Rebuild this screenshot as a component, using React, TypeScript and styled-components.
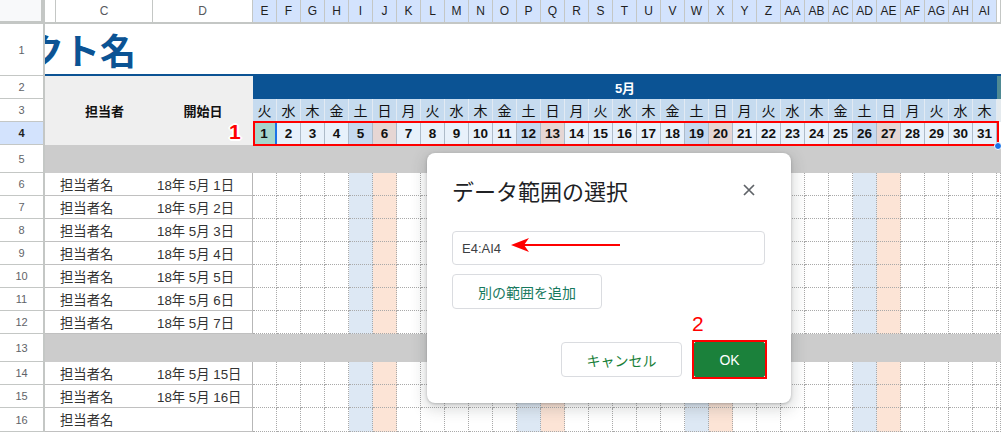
import React from "react";
import styled, { createGlobalStyle, css } from "styled-components";

const GlobalStyle = createGlobalStyle`
  * { box-sizing: border-box; }
  html, body { margin: 0; padding: 0; background: #fff; overflow: hidden; }
  body {
    font-family: "Liberation Sans", "Noto Sans CJK JP", Arial, sans-serif;
    color: #222;
  }
`;

type Kind = "day" | "sat" | "sun";

const WEEK = ["火", "水", "木", "金", "土", "日", "月"];
const DAYS = Array.from({ length: 31 }, (_, i) => i + 1);
const BODY_ROWS: { n: number; date?: string }[] = [
  { n: 6, date: "18年 5月 1日" },
  { n: 7, date: "18年 5月 2日" },
  { n: 8, date: "18年 5月 3日" },
  { n: 9, date: "18年 5月 4日" },
  { n: 10, date: "18年 5月 5日" },
  { n: 11, date: "18年 5月 6日" },
  { n: 12, date: "18年 5月 7日" },
];
const LATE_ROWS: { n: number; date?: string }[] = [
  { n: 14, date: "18年 5月 15日" },
  { n: 15, date: "18年 5月 16日" },
  { n: 16 },
];

const colName = (i: number) => {
  const n = i + 4;
  return n < 26
    ? String.fromCharCode(65 + n)
    : "A" + String.fromCharCode(65 + n - 26);
};
const kindOf = (d: number): Kind =>
  d % 7 === 5 ? "sat" : d % 7 === 6 ? "sun" : "day";

const Page = styled.div`
  position: relative;
  width: 1001px;
  height: 432px;
  overflow: hidden;
`;

const Sheet = styled.div`
  display: grid;
  grid-template-columns: 45px 11px 97px 100px repeat(31, 24px) 1fr;
  grid-template-rows: 24px 52px 23px 23px 23px 28px repeat(7, 23px) 28px 23px 23px 24px;
`;

const Corner = styled.div`
  background: #f8f9fa;
  border-right: 4px solid #c4c7c5;
  border-bottom: 3px solid #c4c7c5;
`;

const ColHead = styled.div<{ $sel?: boolean }>`
  display: flex;
  align-items: center;
  justify-content: center;
  font-size: 12px;
  border-right: 1px solid #c4c7c5;
  border-bottom: 2px solid #c4c7c5;
  background: ${(p) => (p.$sel ? "#d3e3fd" : "#fff")};
  color: ${(p) => (p.$sel ? "#1f1f1f" : "#575a5e")};
`;

const RowHead = styled.div<{ $sel?: boolean }>`
  display: flex;
  align-items: center;
  justify-content: center;
  font-size: 11px;
  border-right: 2px solid #c4c7c5;
  border-bottom: 1px solid #c4c7c5;
  background: ${(p) => (p.$sel ? "#d3e3fd" : "#fff")};
  color: ${(p) => (p.$sel ? "#1f1f1f" : "#5f6368")};
  font-weight: ${(p) => (p.$sel ? 700 : 400)};
`;

/* the sheet is scrolled right, so the title's start is hidden behind the frozen column */
const TitleCell = styled.div`
  grid-column: 2 / -1;
  display: flex;
  align-items: center;
  overflow: hidden;
  border-bottom: 2px solid #0b5394;
`;

const TitleText = styled.h1`
  margin: 0 0 0 -161px;
  white-space: nowrap;
  font: 700 36px/1 "Noto Sans CJK JP", sans-serif;
  color: #0b5394;
`;

const HeadBlock = styled.div`
  grid-row: span 3;
  display: flex;
  align-items: center;
  justify-content: center;
  background: #efefef;
  font: 700 13px "Noto Sans CJK JP", sans-serif;
  color: #111;
`;

const MonthBar = styled.div`
  grid-column: span 31;
  display: flex;
  align-items: center;
  justify-content: center;
  background: #0b5394;
  color: #fff;
  font: 700 13px "Liberation Sans", "Noto Sans CJK JP", sans-serif;
`;

const Edge = styled.div<{ $tone: string }>`
  background: ${(p) => p.$tone};
`;

const WeekCell = styled.div`
  display: flex;
  align-items: center;
  justify-content: center;
  background: #c6dbef;
  border-right: 1px solid #e2eaf3;
  border-bottom: 1px solid #e2eaf3;
  font: 400 14px "Noto Sans CJK JP", sans-serif;
  color: #111;
`;

const dayTone: Record<Kind, string> = {
  day: "#e8f1fb",
  sat: "#c5d9f0",
  sun: "#e6d6d4",
};

const DateCell = styled.div<{ $kind: Kind; $active?: boolean }>`
  display: flex;
  align-items: center;
  justify-content: center;
  border-right: 1px solid #aebbc9;
  background: ${(p) => (p.$active ? "#a6d5cb" : dayTone[p.$kind])};
  font-weight: 700;
  font-size: 13.5px;
  color: #111;
  ${(p) =>
    p.$active &&
    css`
      border-right: 2px solid #1a73e8;
    `}
`;

const Band = styled.div`
  grid-column: 2 / -1;
  background: #cccccc;
`;

const TextCell = styled.div<{ $edge?: boolean }>`
  display: flex;
  align-items: center;
  padding-left: 4px;
  white-space: nowrap;
  font-size: 13.33px;
  color: #333;
  border-bottom: 1px solid #c0c0c0;
  ${(p) =>
    p.$edge &&
    css`
      border-right: 1px solid #b7b7b7;
    `}
`;

const bodyTone: Record<Kind, string> = {
  day: "#fff",
  sat: "#dde8f4",
  sun: "#fce4d6",
};

const DayBody = styled.div<{ $kind: Kind }>`
  background: ${(p) => bodyTone[p.$kind]};
  border-right: 1px dotted #a9a9a9;
  border-bottom: 1px dotted #a9a9a9;
`;

/* annotations on top of the sheet */
const SelBox = styled.div`
  position: absolute;
  left: 253px;
  top: 121px;
  width: 746px;
  height: 25px;
  border: 2px solid #ff0000;
  pointer-events: none;
`;

const Marker = styled.span<{ $x: number; $y: number; $bold?: boolean }>`
  position: absolute;
  left: ${(p) => p.$x}px;
  top: ${(p) => p.$y}px;
  font: ${(p) => (p.$bold ? 700 : 400)} 21px/1 "Liberation Sans", sans-serif;
  color: #ff0000;
  text-shadow: ${(p) =>
    p.$bold
      ? "-2px 0 #fff, 2px 0 #fff, 0 -2px #fff, 0 2px #fff, -1px -1px #fff, 1px 1px #fff, -1px 1px #fff, 1px -1px #fff"
      : "none"};
`;

const Handle = styled.div`
  position: absolute;
  left: 994px;
  top: 142px;
  width: 8px;
  height: 8px;
  border-radius: 50%;
  background: #1a73e8;
  border: 1px solid #fff;
`;

const Dialog = styled.div`
  position: absolute;
  left: 427px;
  top: 153px;
  width: 364px;
  height: 250px;
  padding: 20px 26px 26px 25px;
  display: flex;
  flex-direction: column;
  background: #fff;
  border-radius: 8px;
  box-shadow: 0 4px 14px 3px rgba(60, 64, 67, 0.18),
    0 1px 3px rgba(60, 64, 67, 0.3);
`;

const DialogHead = styled.div`
  display: flex;
  align-items: center;
  justify-content: space-between;
  height: 34px;
`;

const DialogTitle = styled.h2`
  margin: 0;
  font: 400 22px "Noto Sans CJK JP", sans-serif;
  color: #202124;
`;

const Close = styled.button`
  width: 24px;
  height: 24px;
  margin-right: 4px;
  padding: 0;
  border: 0;
  background: none;
  display: flex;
  align-items: center;
  justify-content: center;
`;

const RangeInput = styled.div`
  margin-top: 24px;
  height: 34px;
  display: flex;
  align-items: center;
  padding-left: 9px;
  border: 1px solid #dadce0;
  border-radius: 4px;
  font: 400 13px "Liberation Sans", sans-serif;
  color: #3c4043;
`;

const Button = styled.button<{ $primary?: boolean; $w: number }>`
  width: ${(p) => p.$w}px;
  height: 35px;
  padding: 0;
  border-radius: 4px;
  font: 400 14px "Noto Sans CJK JP", sans-serif;
  border: 1px solid #dadce0;
  background: #fff;
  color: #188038;
  ${(p) =>
    p.$primary &&
    css`
      border-color: #1b813b;
      background: #1b813b;
      color: #fff;
      font: 500 14px "Liberation Sans", sans-serif;
    `}
`;

/* square red highlight drawn round the OK button */
const RedFrame = styled.span`
  display: flex;
  margin: -2px -2px -2px 0;
  border: 2px solid #ff0000;
  & > button {
    border-radius: 2px;
  }
`;

const AddRange = styled(Button)`
  margin-top: 9px;
  align-self: flex-start;
  color: #17795e;
`;

const Footer = styled.div`
  margin-top: auto;
  display: flex;
  align-items: center;
  justify-content: flex-end;
  gap: 10px;
`;

const Arrow = styled.svg`
  position: absolute;
  left: 510px;
  top: 237px;
`;

const BodyRow: React.FC<{ n: number; date?: string }> = ({ n, date }) => (
  <>
    <RowHead>{n}</RowHead>
    <TextCell />
    <TextCell>担当者名</TextCell>
    <TextCell $edge>{date}</TextCell>
    {DAYS.map((d) => (
      <DayBody key={d} $kind={kindOf(d)} />
    ))}
    <DayBody $kind="day" />
  </>
);

export default function App() {
  return (
    <Page>
      <GlobalStyle />
      <Sheet>
        {/* column headers */}
        <Corner />
        <ColHead />
        <ColHead>C</ColHead>
        <ColHead>D</ColHead>
        {DAYS.map((d, i) => (
          <ColHead key={d} $sel>
            {colName(i)}
          </ColHead>
        ))}
        <ColHead />

        {/* row 1 */}
        <RowHead>1</RowHead>
        <TitleCell>
          <TitleText>プロジェクト名</TitleText>
        </TitleCell>

        {/* rows 2-4 */}
        <RowHead>2</RowHead>
        <HeadBlock />
        <HeadBlock>担当者</HeadBlock>
        <HeadBlock>開始日</HeadBlock>
        <MonthBar>5月</MonthBar>
        <Edge $tone="#4f8a93" />

        <RowHead>3</RowHead>
        {DAYS.map((d) => (
          <WeekCell key={d}>{WEEK[(d - 1) % 7]}</WeekCell>
        ))}
        <Edge $tone="#e4eaee" />

        <RowHead $sel>4</RowHead>
        {DAYS.map((d) => (
          <DateCell key={d} $kind={kindOf(d)} $active={d === 1}>
            {d}
          </DateCell>
        ))}
        <Edge $tone="#fff" />

        <RowHead>5</RowHead>
        <Band />

        {BODY_ROWS.map((r) => (
          <BodyRow key={r.n} {...r} />
        ))}

        <RowHead>13</RowHead>
        <Band />

        {LATE_ROWS.map((r) => (
          <BodyRow key={r.n} {...r} />
        ))}
      </Sheet>

      <SelBox />
      <Marker $x={229} $y={121} $bold>
        1
      </Marker>
      <Handle />

      <Dialog>
        <DialogHead>
          <DialogTitle>データ範囲の選択</DialogTitle>
          <Close aria-label="閉じる">
            <svg width="12" height="12" viewBox="0 0 12 12">
              <path
                d="M1 1 L11 11 M11 1 L1 11"
                stroke="#5f6368"
                strokeWidth="1.7"
                fill="none"
              />
            </svg>
          </Close>
        </DialogHead>
        <RangeInput>E4:AI4</RangeInput>
        <AddRange $w={150}>別の範囲を追加</AddRange>
        <Footer>
          <Button $w={121}>キャンセル</Button>
          <RedFrame>
            <Button $w={71} $primary>
              OK
            </Button>
          </RedFrame>
        </Footer>
      </Dialog>

      <Arrow width="112" height="16" viewBox="0 0 112 16">
        <path d="M13 8 H110" stroke="#ff0000" strokeWidth="2" />
        <path d="M1 8 L19 1 L14 8 L19 15 Z" fill="#ff0000" />
      </Arrow>
      <Marker $x={692} $y={313}>
        2
      </Marker>
    </Page>
  );
}
